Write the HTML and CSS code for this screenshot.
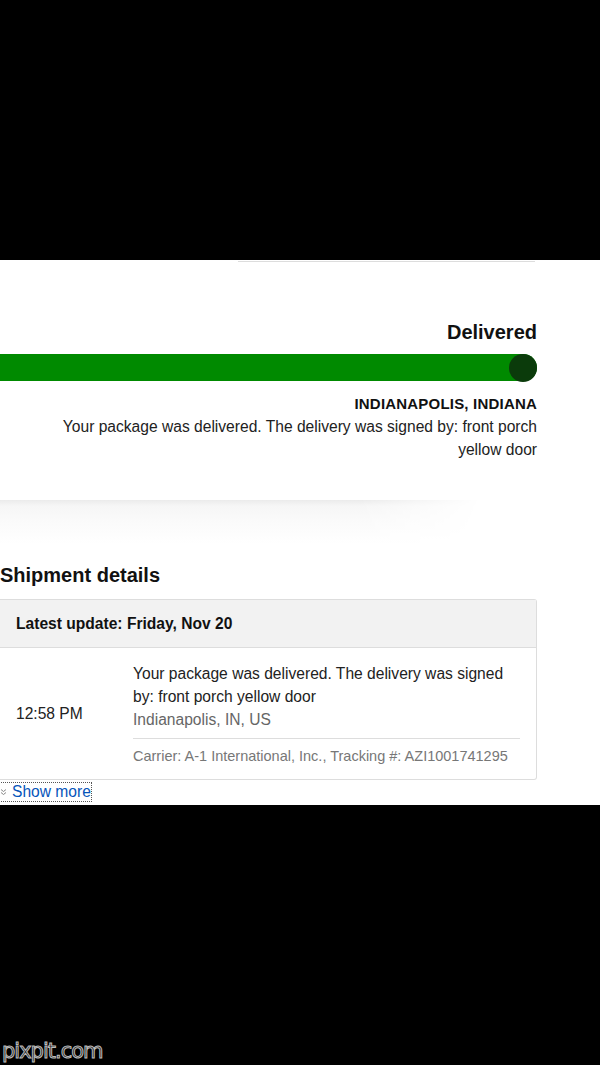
FILE: index.html
```html
<!DOCTYPE html>
<html>
<head>
<meta charset="utf-8">
<link rel="stylesheet" href="styles.css">
</head>
<body>
<div class="band-top"></div>
<main class="page">
  <div class="topline"></div>
  <section class="status">
    <h1 class="status-title">Delivered</h1>
    <div class="progress"><span class="progress-dot"></span></div>
    <div class="status-city">INDIANAPOLIS, INDIANA</div>
    <p class="status-text">Your package was delivered. The delivery was signed by: front porch yellow door</p>
  </section>
  <div class="fade"></div>
  <h2 class="details-title">Shipment details</h2>
  <div class="card">
    <div class="card-head">Latest update: Friday, Nov 20</div>
    <div class="card-row">
      <div class="time">12:58 PM</div>
      <div class="event">
        <div class="event-text">Your package was delivered. The delivery was signed by: front porch yellow door</div>
        <div class="event-loc">Indianapolis, IN, US</div>
        <div class="event-carrier">Carrier: A-1 International, Inc., Tracking #: AZI1001741295</div>
      </div>
    </div>
  </div>
  <a class="show-more" href="#"><svg class="chev" width="7" height="8" viewBox="0 0 7 8"><path d="M1 1.5l2.5 2 2.5-2M1 4.5l2.5 2 2.5-2" fill="none" stroke="#888" stroke-width="1"/></svg>Show more</a>
</main>
<footer class="band-bottom"><span class="wm">pixpit.com</span></footer>
</body>
</html>
```
FILE: styles.css
```css
html, body { margin: 0; padding: 0; }
body { background: #000; font-family: "Liberation Sans", Arial, sans-serif; color: #111; width: 600px; }
.band-top { height: 260px; background: #000; }
.page { background: #fff; height: 545px; position: relative; overflow: hidden; }
.topline { margin-left: 238px; width: 297px; height: 1px; background: #ddd; margin-top: 1px; }
.status { padding: 0 63px 0 0; text-align: right; }
.status-title { margin: 58px 0 0 0; font-size: 20px; font-weight: bold; line-height: 24px; color: #111; }
.progress { margin-top: 10px; height: 27px; background: #008a00; border-radius: 0 14px 14px 0; position: relative; }
.progress-dot { position: absolute; right: 0; top: -0.5px; width: 28px; height: 28px; border-radius: 50%; background: #0b3b0b; }
.status-city { margin-top: 14px; font-size: 15px; font-weight: bold; line-height: 18px; color: #111; letter-spacing: 0.2px; }
.status-text { margin: 2px 0 0 auto; width: 490px; font-size: 15.6px; line-height: 23px; color: #222; }
.fade { margin-top: 39px; height: 44px; background: linear-gradient(to bottom, #ebebeb 0px, #f6f6f6 6px, #fafafa 20px, #fff 44px); -webkit-mask-image: linear-gradient(to right, #000 0%, #000 60%, transparent 80%); mask-image: linear-gradient(to right, #000 0%, #000 60%, transparent 80%); }
.details-title { margin: 19px 0 0 0; font-size: 20px; font-weight: bold; line-height: 24px; color: #111; }
.card { margin-top: 12px; width: 537px; border: 1px solid #ddd; border-left: none; border-radius: 0 3px 3px 0; box-sizing: border-box; }
.card-head { background: #f2f2f2; height: 47px; line-height: 47px; padding-left: 16px; font-size: 15.6px; font-weight: bold; color: #111; border-bottom: 1px solid #ddd; }
.card-row { display: flex; align-items: center; padding: 14px 16px 13px 16px; }
.time { width: 117px; font-size: 15.6px; color: #222; }
.event { flex: 1; }
.event-text { font-size: 15.6px; line-height: 23px; color: #222; }
.event-loc { font-size: 15.6px; line-height: 23px; color: #666; }
.event-carrier { margin-top: 7px; border-top: 1px solid #ddd; padding-top: 7px; font-size: 14.5px; line-height: 20px; color: #777; }
.show-more { display: inline-flex; align-items: center; gap: 5px; margin-top: 3px; font-size: 15.6px; line-height: 18px; color: #0654ba; text-decoration: none; outline: 1px dotted #555; }
.chev { display: block; }
.band-bottom { height: 260px; background: #000; position: relative; }
.wm { position: absolute; left: 2px; bottom: 2px; font-family: "DejaVu Sans", sans-serif; font-size: 21px; letter-spacing: -1px; color: #222; -webkit-text-stroke: 1px #bbb; }
```
